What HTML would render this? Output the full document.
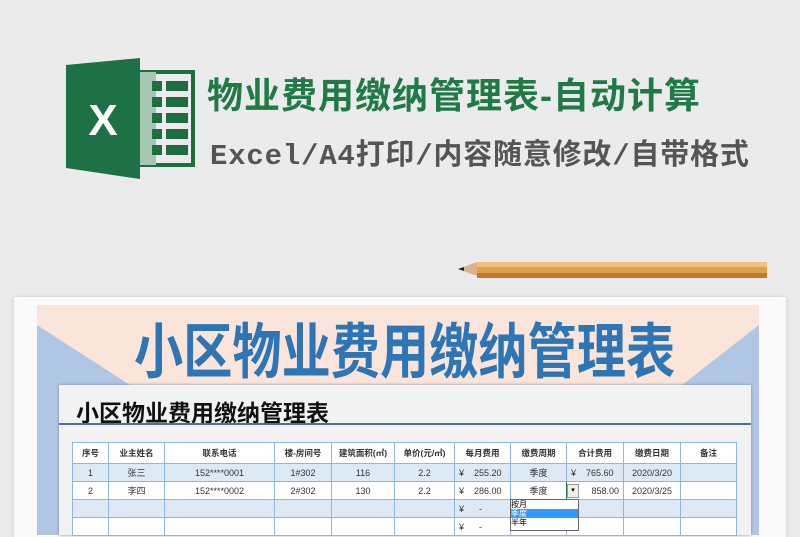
<!DOCTYPE html><html><head><meta charset="utf-8"><style>
body{margin:0;width:800px;height:526px;overflow:hidden;background:#ebebeb;font-family:"Liberation Sans","Noto Sans CJK SC",sans-serif;position:relative}
.a{position:absolute}
table{border-collapse:collapse;table-layout:fixed;position:absolute;left:72px;top:442px;font-size:9px;color:#333}
td{border:1px solid #8fb6e0;text-align:center;padding:0;white-space:nowrap;overflow:hidden}
tr.h td{height:20px;font-weight:bold;background:#fff;font-size:8.5px}
tr.r td{height:17px}
tr.b td{background:#ddeaf6}
tr.w td{background:#fff}
.y{text-align:left;padding-left:4px}
</style></head><body>
<!-- logo -->
<svg class="a" style="left:60px;top:55px" width="140" height="130">
<rect x="78" y="17" width="55" height="93" fill="none" stroke="#1e6e3f" stroke-width="4"/>
<rect x="78" y="17" width="18" height="93" fill="#a8c7b2"/>
<g fill="#1e6e3f"><rect x="92" y="26" width="10" height="10"/><rect x="106" y="26" width="22" height="10"/><rect x="92" y="42" width="10" height="10"/><rect x="106" y="42" width="22" height="10"/><rect x="92" y="58" width="10" height="10"/><rect x="106" y="58" width="22" height="10"/><rect x="92" y="74" width="10" height="10"/><rect x="106" y="74" width="22" height="10"/><rect x="92" y="90" width="10" height="10"/><rect x="106" y="90" width="22" height="10"/></g>
<polygon points="6,10 80,3 80,124 6,113" fill="#1e7145"/>
<text x="43" y="80" font-family="Liberation Sans" font-weight="bold" font-size="44" fill="#fff" text-anchor="middle">X</text>
</svg>
<div class="a" style="left:207px;top:67px;font-size:36px;font-weight:bold;color:#1f7a45;white-space:nowrap;letter-spacing:1px">物业费用缴纳管理表-自动计算</div>
<div class="a" style="left:210px;top:131px;font-size:29px;color:#555;white-space:nowrap;font-family:'Liberation Mono','Noto Sans CJK SC',monospace;font-weight:bold;letter-spacing:0.8px">Excel/A4打印/内容随意修改/自带格式</div>
<!-- pencil -->
<svg class="a" style="left:455px;top:258px" width="320" height="30">
<polygon points="3,11 22,4 22,18" fill="#d9b48a"/><polygon points="3,11 9,9 9,13" fill="#222"/>
<rect x="22" y="4" width="290" height="16" fill="#e0a050"/><rect x="22" y="4" width="290" height="5" fill="#f0c080"/><rect x="22" y="15" width="290" height="5" fill="#c07a30"/>
</svg>
<!-- card -->
<div class="a" style="left:14px;top:297px;width:772px;height:240px;background:#fafafa;box-shadow:0 0 4px #ccc"></div>
<div class="a" style="left:37px;top:305px;width:722px;height:230px;background:#b0c6e4"></div>
<svg class="a" style="left:37px;top:305px" width="722" height="80"><polygon points="0,0 722,0 722,20 645,80 93,80 0,20" fill="#fbe5da"/></svg>
<div class="a" style="left:134px;top:304px;font-size:60px;font-weight:bold;color:#2e75b6;white-space:nowrap;transform:scaleX(0.82);transform-origin:0 0">小区物业费用缴纳管理表</div>
<div class="a" style="left:59px;top:385px;width:692px;height:150px;background:#f2f2f2;box-shadow:0 0 3px #889"></div>
<div class="a" style="left:76px;top:394px;font-size:23px;font-weight:bold;color:#111">小区物业费用缴纳管理表</div>
<div class="a" style="left:59px;top:423px;width:692px;height:2px;background:#4a6fae"></div>
<table>
<colgroup><col style="width:36px"><col style="width:56px"><col style="width:110px"><col style="width:57px"><col style="width:63px"><col style="width:60px"><col style="width:56px"><col style="width:56px"><col style="width:57px"><col style="width:57px"><col style="width:56px"></colgroup>
<tr class="h"><td>序号</td><td>业主姓名</td><td>联系电话</td><td>楼-房间号</td><td>建筑面积(㎡)</td><td>单价(元/㎡)</td><td>每月费用</td><td>缴费周期</td><td>合计费用</td><td>缴费日期</td><td>备注</td></tr>
<tr class="r b"><td>1</td><td>张三</td><td>152****0001</td><td>1#302</td><td>116</td><td>2.2</td><td class="y">¥&nbsp;&nbsp;&nbsp;&nbsp;255.20</td><td>季度</td><td class="y">¥&nbsp;&nbsp;&nbsp;&nbsp;765.60</td><td>2020/3/20</td><td></td></tr>
<tr class="r w"><td>2</td><td>李四</td><td>152****0002</td><td>2#302</td><td>130</td><td>2.2</td><td class="y">¥&nbsp;&nbsp;&nbsp;&nbsp;286.00</td><td style="border:1px solid #2a7a3a">季度</td><td style="text-align:right;padding-right:4px">858.00</td><td>2020/3/25</td><td></td></tr>
<tr class="r b"><td></td><td></td><td></td><td></td><td></td><td></td><td class="y">¥&nbsp;&nbsp;&nbsp;&nbsp;&nbsp;&nbsp;-</td><td></td><td></td><td></td><td></td></tr>
<tr class="r w"><td></td><td></td><td></td><td></td><td></td><td></td><td class="y">¥&nbsp;&nbsp;&nbsp;&nbsp;&nbsp;&nbsp;-</td><td></td><td></td><td></td><td></td></tr>
</table>
<div class="a" style="left:567px;top:484px;width:10px;height:12px;background:#eee;border:1px solid #999;font-size:7px;text-align:center;line-height:12px">▾</div>
<div class="a" style="left:510px;top:499px;width:67px;height:30px;background:#fff;border:1px solid #666;font-size:8px;line-height:9px">
<div>按月</div><div style="background:#3399ff;color:#fff">季度</div><div>半年</div></div>
</body></html>
